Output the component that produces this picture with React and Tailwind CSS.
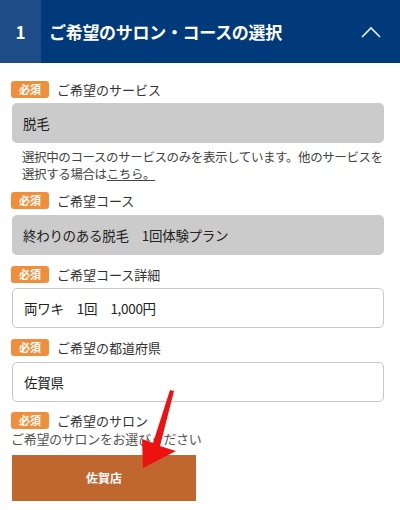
import React from "react";

const font = { fontFamily: '"Noto Sans CJK JP", "Noto Sans", sans-serif' };

function Badge() {
  return (
    <span className="inline-flex h-[17px] items-center rounded-[3px] bg-[#ef8f3c] px-[8px] text-[11px] font-bold leading-none text-white">
      必須
    </span>
  );
}

function Label({ children, className = "" }) {
  return (
    <div className={`flex items-center gap-[8px] ${className}`}>
      <Badge />
      <span className="text-[13px] leading-[17px] text-[#333]">{children}</span>
    </div>
  );
}

function Field({ children, disabled, className = "" }) {
  return (
    <div
      className={`flex h-[40px] items-center rounded-[5px] px-[11px] text-[13.5px] tracking-[-0.3px] text-[#222] ${
        disabled ? "bg-[#cbcbcb]" : "border border-[#c8c8c8] bg-white"
      } ${className}`}
    >
      {children}
    </div>
  );
}

export default function App() {
  return (
    <div className="relative h-[510px] w-[400px] overflow-hidden bg-white" style={font}>
      <header className="flex h-[63px] bg-[#013a7b] text-white">
        <div className="flex w-[41px] items-center justify-center bg-[#1e4c87] text-[17px] font-bold">
          1
        </div>
        <h2 className="flex flex-1 items-center pl-[8px] text-[17px] font-bold tracking-[-0.3px]">
          ご希望のサロン・コースの選択
        </h2>
        <div className="flex w-[52px] items-center justify-center pr-[6px]">
          <svg width="20" height="12" viewBox="0 0 20 12" fill="none">
            <path d="M1 11 L10 2 L19 11" stroke="#e8eef7" strokeWidth="1.6" />
          </svg>
        </div>
      </header>

      <div className="pl-[11px] pr-[16px]">
        <Label className="mt-[18px]">ご希望のサービス</Label>
        <Field disabled className="mt-[5px] ml-[1px]">脱毛</Field>
        <div className="mt-[5px] pl-[11px] text-[12.5px] leading-[17px] tracking-[-0.4px] text-[#444]">
          <p className="whitespace-nowrap">選択中のコースのサービスのみを表示しています。他のサービスを</p>
          <p className="whitespace-nowrap">
            選択する場合は<span className="underline">こちら。</span>
          </p>
        </div>

        <Label className="mt-[10px]">ご希望コース</Label>
        <Field disabled className="mt-[6px] ml-[1px]">終わりのある脱毛　1回体験プラン</Field>

        <Label className="mt-[11px]">ご希望コース詳細</Label>
        <Field className="mt-[5px] ml-[1px]">両ワキ　1回　1,000円</Field>

        <Label className="mt-[11px]">ご希望の都道府県</Label>
        <Field className="mt-[6px] ml-[1px]">佐賀県</Field>

        <Label className="mt-[10px]">ご希望のサロン</Label>
        <p className="mt-[1px] text-[13px] leading-[17px] tracking-[-0.3px] text-[#555]">
          ご希望のサロンをお選びください
        </p>
        <button className="ml-[1px] mt-[8px] flex h-[46px] w-[184px] items-center justify-center bg-[#c0672f] text-[12px] font-bold text-white">
          佐賀店
        </button>
      </div>

      <svg className="pointer-events-none absolute left-0 top-0" width="400" height="510">
        <polygon
          points="170,390 174,391 160,446 176,451 143,468 142,439 153,443"
          fill="#ee1111"
        />
      </svg>
    </div>
  );
}
